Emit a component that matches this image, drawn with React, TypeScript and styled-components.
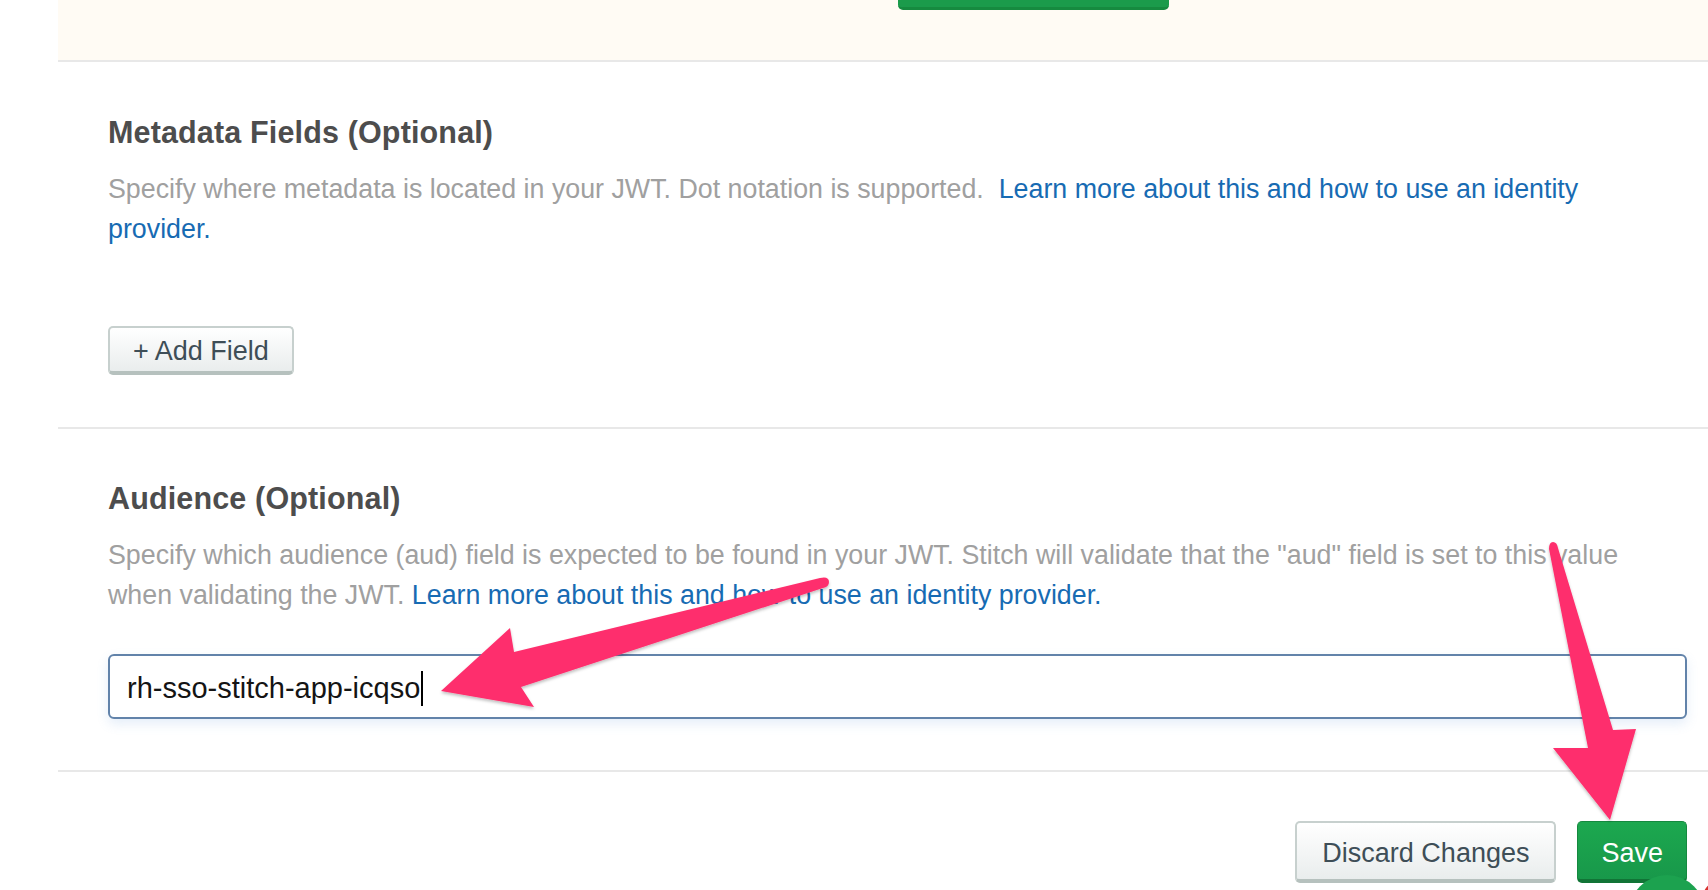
import React from "react";
import styled, { createGlobalStyle } from "styled-components";

const GlobalStyle = createGlobalStyle`
  html, body {
    margin: 0;
    padding: 0;
    background: #ffffff;
    overflow: hidden;
  }
  body {
    font-family: "Liberation Sans", Arial, Helvetica, sans-serif;
    -webkit-font-smoothing: antialiased;
  }
  * { box-sizing: border-box; }
`;

const Page = styled.div`
  position: relative;
  display: flex;
  width: 1708px;
  height: 890px;
  overflow: hidden;
  background: #ffffff;
`;

const Gutter = styled.aside`
  flex: 0 0 58px;
  background: #ffffff;
`;

const Main = styled.main`
  flex: 1;
  display: flex;
  flex-direction: column;
  min-width: 0;
`;

const NoticeBand = styled.div`
  height: 62px;
  flex: 0 0 62px;
  background: #fffbf4;
  border-bottom: 2px solid #e8e8e8;
  padding-left: 840px;
`;

const ClippedPrimary = styled.div`
  width: 271px;
  height: 10px;
  background: #1b9b4b;
  border-bottom: 3px solid #168a3f;
  border-radius: 0 0 5px 5px;
`;

const Section = styled.section<{ $top: number; $bottom: number }>`
  padding: ${(p) => `${p.$top}px 21px ${p.$bottom}px 50px`};
  border-bottom: 2px solid #e8e8e8;
`;

const Heading = styled.h2`
  margin: 0;
  font-size: 30.5px;
  line-height: 36px;
  font-weight: 700;
  color: #4d4d4d;
  letter-spacing: 0.15px;
`;

const Description = styled.p`
  margin: 19px 0 0;
  font-size: 26.8px;
  line-height: 40px;
  color: #a0a0a0;
`;

const DocLink = styled.a`
  color: #176bb3;
  text-decoration: none;
`;

const SecondaryButton = styled.button<{ $height: number; $pad: number; $mt?: number; $shift: number }>`
  display: inline-flex;
  align-items: center;
  justify-content: center;
  height: ${(p) => p.$height}px;
  padding: ${(p) => p.$shift}px ${(p) => p.$pad}px 0;
  margin-top: ${(p) => p.$mt ?? 0}px;
  font-family: "Liberation Sans", Arial, sans-serif;
  font-size: 27px;
  color: #3e4e57;
  background: linear-gradient(180deg, #ffffff 0%, #f3f5f5 55%, #e9eded 100%);
  border: 2px solid #c7d0ce;
  border-bottom: 4px solid #b6c1be;
  border-radius: 5px;
  cursor: pointer;
`;

const PrimaryButton = styled.button`
  display: inline-flex;
  align-items: center;
  justify-content: center;
  height: 62px;
  padding: 5px 23px 0;
  font-family: "Liberation Sans", Arial, sans-serif;
  font-size: 27px;
  color: #ffffff;
  background: linear-gradient(180deg, #1ca84f 0%, #18984a 100%);
  border: 1px solid #15893f;
  border-bottom: 4px solid #117436;
  border-radius: 5px;
  cursor: pointer;
`;

const TextField = styled.div`
  display: flex;
  align-items: center;
  margin-top: 39px;
  height: 65px;
  padding: 3px 17px 0;
  border: 2px solid #6283aa;
  border-radius: 6px;
  background: #ffffff;
  box-shadow: 0 5px 12px rgba(96, 150, 215, 0.16);
  font-size: 29px;
  color: #141414;
`;

const Caret = styled.span`
  display: inline-block;
  width: 2px;
  height: 35px;
  margin-left: 1px;
  background: #000000;
`;

const Footer = styled.footer`
  display: flex;
  justify-content: flex-end;
  gap: 21px;
  padding: 49px 21px 0 50px;
`;

const Annotations = styled.svg`
  position: absolute;
  top: 0;
  left: 0;
  width: 1708px;
  height: 890px;
  pointer-events: none;
`;

export default function App() {
  return (
    <>
      <GlobalStyle />
      <Page>
        <Gutter />
        <Main>
          <NoticeBand>
            <ClippedPrimary />
          </NoticeBand>

          <Section $top={52} $bottom={52}>
            <Heading>Metadata Fields (Optional)</Heading>
            <Description>
              Specify where metadata is located in your JWT. Dot notation is supported.{"\u00a0 "}
              <DocLink href="#">Learn more about this and how to use an identity provider.</DocLink>
            </Description>
            <SecondaryButton $height={49} $pad={23} $mt={77} $shift={3}>+ Add Field</SecondaryButton>
          </Section>

          <Section $top={51} $bottom={51}>
            <Heading>Audience (Optional)</Heading>
            <Description>
              Specify which audience (aud) field is expected to be found in your JWT. Stitch will validate
              that the "aud" field is set to this value when validating the JWT.{" "}
              <DocLink href="#">Learn more about this and how to use an identity provider.</DocLink>
            </Description>
            <TextField role="textbox">
              rh-sso-stitch-app-icqso
              <Caret />
            </TextField>
          </Section>

          <Footer>
            <SecondaryButton $height={62} $pad={25} $shift={5}>Discard Changes</SecondaryButton>
            <PrimaryButton>Save</PrimaryButton>
          </Footer>
        </Main>

        <Annotations viewBox="0 0 1708 890">
          <defs>
            <filter id="arrowShadow" x="-10%" y="-10%" width="120%" height="120%">
              <feDropShadow dx="0" dy="2" stdDeviation="1.5" floodColor="#000" floodOpacity="0.25" />
            </filter>
          </defs>
          <g fill="#fe2f6d" filter="url(#arrowShadow)">
            <path d="M441 691 L510 628 L514 652 L820 578 Q829 576 829 582 Q829 587 823 588 L521 687 L534 707 Z" />
            <path d="M1610 820 L1553 748 L1588 748 L1549 549 Q1549 542 1553 542 Q1557 542 1558 548 L1613 730 L1636 729 Z" />
          </g>
          <circle cx="1722" cy="900" r="20" fill="#d8312f" />
          <circle cx="1667" cy="913" r="38" fill="#1ca24f" />
        </Annotations>
      </Page>
    </>
  );
}
